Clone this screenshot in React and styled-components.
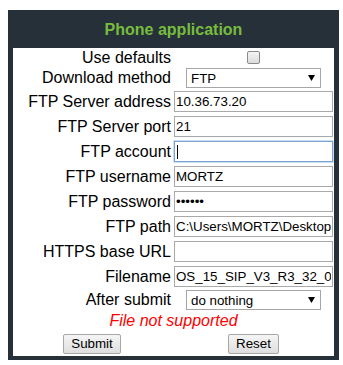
import React from "react";
import styled, { createGlobalStyle } from "styled-components";

const Global = createGlobalStyle`
  html, body { margin: 0; padding: 0; background: #fff; }
  body { font-family: "Liberation Sans", Arial, sans-serif; }
  * { box-sizing: border-box; }
`;

const Panel = styled.div`
  margin: 10px 0 0 8px;
  width: 331px;
  background: #263039;
  padding: 0 5px 4px 5px;
`;

const Title = styled.h1`
  margin: 0;
  height: 38px;
  padding-top: 1px;
  line-height: 37px;
  text-align: center;
  font-size: 16px;
  font-weight: bold;
  color: #78bc3e;
`;

const Body = styled.div`
  background: #fff;
  display: flex;
  flex-direction: column;
`;

const Row = styled.div`
  display: grid;
  grid-template-columns: 158px 159px;
  column-gap: 3px;
  height: ${(p) => p.$h}px;
  align-items: center;
`;

const Label = styled.div`
  text-align: right;
  font-size: 16px;
  line-height: 18px;
  color: #000;
  white-space: nowrap;
`;

const Center = styled.div`
  display: flex;
  justify-content: center;
  align-items: center;
`;

const CheckBox = styled.span`
  display: block;
  width: 13px;
  height: 13px;
  border: 1px solid #8a8a8a;
  border-radius: 2px;
  background: linear-gradient(#f4f4f4, #dcdcdc);
`;

const Select = styled.div`
  width: 135px;
  height: 20px;
  border: 1px solid #a6a6a6;
  background: #fff;
  display: flex;
  align-items: center;
  justify-content: space-between;
  padding: 0 5px 0 4px;
  font-size: 13.333px;
  color: #000;
`;

const Field = styled.div`
  position: relative;
  height: 21px;
`;

const Input = styled.input`
  display: block;
  width: 159px;
  height: 21px;
  margin: 0;
  border: 1px solid ${(p) => (p.$focus ? "#7ba3d6" : "#a9a9a9")};
  box-shadow: ${(p) => (p.$focus ? "0 0 0 0.5px #9cbbe3" : "none")};
  padding: 0 1px;
  font-family: "Liberation Sans", Arial, sans-serif;
  font-size: 13.333px;
  color: #000;
  background: #fff;
  outline: none;
`;

const Caret = styled.span`
  position: absolute;
  left: 3px;
  top: 4px;
  width: 1px;
  height: 14px;
  background: #000;
`;

const Error = styled.div`
  text-align: center;
  color: #ff0000;
  font-style: italic;
  font-size: 16px;
  line-height: 18px;
  height: ${(p) => p.$h}px;
  display: flex;
  align-items: center;
  justify-content: center;
`;

const ButtonRow = styled.div`
  display: grid;
  grid-template-columns: 158px 159px;
  column-gap: 3px;
  height: 26px;
  padding-top: 4px;
  align-items: start;
`;

const Button = styled.button`
  height: 20px;
  padding: 0 7px;
  margin: 0;
  border: 1px solid #a7a7a7;
  border-radius: 2px;
  background: linear-gradient(#f5f5f5, #dedede);
  font-family: "Liberation Sans", Arial, sans-serif;
  font-size: 13.333px;
  color: #000;
  line-height: 18px;
`;

const Arrow = () => (
  <svg width="7" height="6" viewBox="0 0 7 6">
    <polygon points="0,0 7,0 3.5,6" fill="#000" />
  </svg>
);

const InputRow = ({ label, value, type, focus }) => (
  <Row $h={25}>
    <Label>{label}</Label>
    <Field>
      <Input type={type || "text"} defaultValue={value} readOnly $focus={focus} />
      {focus && <Caret />}
    </Field>
  </Row>
);

export default function App() {
  return (
    <>
      <Global />
      <Panel>
        <Title>Phone application</Title>
        <Body>
          <Row $h={19}>
            <Label>Use defaults</Label>
            <Center>
              <CheckBox />
            </Center>
          </Row>
          <Row $h={22}>
            <Label>Download method</Label>
            <Center>
              <Select>
                <span>FTP</span>
                <Arrow />
              </Select>
            </Center>
          </Row>
          <InputRow label="FTP Server address" value="10.36.73.20" />
          <InputRow label="FTP Server port" value="21" />
          <InputRow label="FTP account" value="" focus />
          <InputRow label="FTP username" value="MORTZ" />
          <InputRow label="FTP password" value="secret" type="password" />
          <InputRow label="FTP path" value="C:\Users\MORTZ\Desktop\firmware" />
          <InputRow label="HTTPS base URL" value="" />
          <InputRow label="Filename" value="OS_15_SIP_V3_R3_32_0.img" />
          <Row $h={22}>
            <Label>After submit</Label>
            <Center>
              <Select>
                <span>do nothing</span>
                <Arrow />
              </Select>
            </Center>
          </Row>
          <Error $h={19}>File not supported</Error>
          <ButtonRow>
            <Center>
              <Button>Submit</Button>
            </Center>
            <Center>
              <Button>Reset</Button>
            </Center>
          </ButtonRow>
        </Body>
      </Panel>
    </>
  );
}
